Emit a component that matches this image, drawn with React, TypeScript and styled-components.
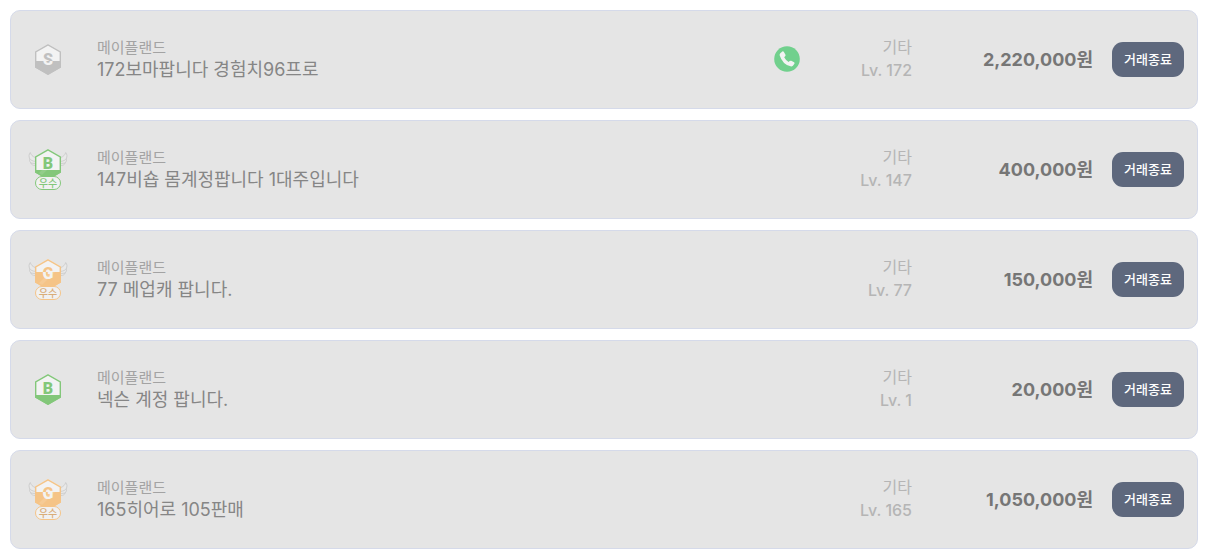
import React, { useId } from "react";
import styled, { createGlobalStyle } from "styled-components";

const GlobalStyle = createGlobalStyle`
  * { box-sizing: border-box; }
  body {
    margin: 0;
    background: #ffffff;
    font-family: Inter, "Noto Sans CJK KR", sans-serif;
  }
`;

type Grade = "S" | "B" | "G";

interface Listing {
  grade: Grade;
  excellent: boolean;
  phone: boolean;
  game: string;
  title: string;
  category: string;
  level: number;
  price: string;
}

const listings: Listing[] = [
  { grade: "S", excellent: false, phone: true, game: "메이플랜드", title: "172보마팝니다 경험치96프로", category: "기타", level: 172, price: "2,220,000원" },
  { grade: "B", excellent: true, phone: false, game: "메이플랜드", title: "147비숍 몸계정팝니다 1대주입니다", category: "기타", level: 147, price: "400,000원" },
  { grade: "G", excellent: true, phone: false, game: "메이플랜드", title: "77 메업캐 팝니다.", category: "기타", level: 77, price: "150,000원" },
  { grade: "B", excellent: false, phone: false, game: "메이플랜드", title: "넥슨 계정 팝니다.", category: "기타", level: 1, price: "20,000원" },
  { grade: "G", excellent: true, phone: false, game: "메이플랜드", title: "165히어로 105판매", category: "기타", level: 165, price: "1,050,000원" },
];

const List = styled.ul`
  display: flex;
  flex-direction: column;
  gap: 11px;
  margin: 0;
  padding: 10px 7px 4px 10px;
  list-style: none;
`;

const Card = styled.li`
  display: flex;
  align-items: center;
  min-height: 99px;
  padding: 0 13px 0 17px;
  background: #e5e5e5;
  border: 1px solid #d5daea;
  border-radius: 10px;
`;

const BadgeSlot = styled.div`
  display: flex;
  flex: none;
  width: 40px;
  margin-right: 29px;
`;

const Summary = styled.div`
  display: flex;
  flex: 1;
  flex-direction: column;
  min-width: 0;
  padding-bottom: 1px;
`;

const Game = styled.span`
  font-size: 15px;
  line-height: 21px;
  color: #a3a3a3;
`;

const Title = styled.span`
  font-size: 18px;
  line-height: 24px;
  color: #868686;
`;

const PhoneSlot = styled.div`
  display: flex;
  flex: none;
  width: 26px;
  padding-bottom: 1px;
`;

const Details = styled.div`
  display: flex;
  flex: none;
  flex-direction: column;
  width: 112px;
  padding-bottom: 2px;
  font-size: 16px;
  font-weight: 500;
  line-height: 23px;
  text-align: right;
  color: #b5b5b5;
`;

const Category = styled.span`
  font-weight: 400;
`;

const Price = styled.strong`
  flex: none;
  width: 181px;
  margin-right: 19px;
  font-size: 18px;
  font-weight: 700;
  line-height: 24px;
  text-align: right;
  color: #767676;
`;

const StatusButton = styled.button`
  flex: none;
  width: 72px;
  height: 35px;
  padding: 0 0 2px;
  border: 0;
  border-radius: 11px;
  background: #5e687d;
  color: #ffffff;
  font-family: inherit;
  font-size: 13px;
  font-weight: 500;
  line-height: 20px;
`;

const gradeStyle = {
  S: { color: "#c0c0c0", split: 20, baseline: 24 },
  B: { color: "#83c77a", split: 24, baseline: 23 },
  G: { color: "#f5c487", split: 16, baseline: 23 },
};

const Wing = () => (
  <g fill="#e9e9e9" stroke="#cbcbcb" strokeWidth="0.9" strokeLinecap="round" strokeLinejoin="round">
    <path d="M7 19.500C4.500 19.500 3 18.300 3 17C1.600 15.800 1.300 14 1.700 12.700C0.700 10.500 0.800 8.200 2.300 6.500C3 9 4.500 10.500 7 11.500Z" />
    <path d="M1.700 12.700C3 14.500 4.500 15 6.500 15.300M3 17L6.500 17.500" fill="none" />
  </g>
);

function GradeBadge({ grade, excellent }: { grade: Grade; excellent: boolean }) {
  const id = useId();
  const { color, split, baseline } = gradeStyle[grade];
  const at = grade === "B" ? 30 : split;
  return (
    <svg width="40" height="41" viewBox="0 0 40 41" role="img" aria-label={grade}>
      <defs>
        <linearGradient id={id} gradientUnits="userSpaceOnUse" x1="0" y1="0" x2="0" y2="42">
          <stop offset={at / 42} stopColor={color} />
          <stop offset={at / 42} stopColor="#f3f3f3" />
        </linearGradient>
        <clipPath id={id + "c"}>
          <path d="M20 3L33 10.500V26.500L20 34L7 26.500V10.500Z" />
        </clipPath>
      </defs>
      <g transform={excellent ? "translate(0 -3)" : "translate(0 2)"}>
        {excellent && (
          <>
            <Wing />
            <g transform="matrix(-1 0 0 1 40 0)"><Wing /></g>
          </>
        )}
        <path d="M20 3L33 10.500V26.500L20 34L7 26.500V10.500Z" fill="#f3f3f3" />
        <g clipPath={`url(#${id}c)`}>
          <path d={`M6 ${split}H34V35H6Z`} fill={color} />
          {excellent && <path d="M7 31L22 16H27L12 31Z" fill="#ffffff" opacity="0.12" />}
        </g>
        <path d="M20 3.800L32.300 10.900V26.100L20 33.200L7.700 26.100V10.900Z" fill="none" stroke={color} strokeWidth="1.400" />
        <text x="20" y={baseline} textAnchor="middle" fontFamily="Roboto, sans-serif" fontWeight="900" fontSize="16" fill={`url(#${id})`}>
          {grade}
        </text>
      </g>
      {excellent && (
        <>
          <rect x="7.500" y="27.500" width="25" height="13" rx="6.500" fill="#f1f1f1" stroke={color} />
          <text x="20" y="37.500" textAnchor="middle" fontFamily="'Noto Sans CJK KR', sans-serif" fontWeight="500" fontSize="10" fill={grade === "G" ? "#d9ad78" : color}>
            우수
          </text>
        </>
      )}
    </svg>
  );
}

const PhoneIcon = () => (
  <svg width="26" height="26" viewBox="0 0 26 26" role="img" aria-label="전화">
    <circle cx="13" cy="13" r="12.800" fill="#71d08d" />
    <path
      d="M6.300 7.200L8.300 5.500Q9.200 5 9.900 5.900L11.500 8.800Q11.900 9.600 11.100 10.300L10.200 11.200Q11.500 14 14.600 15.900L15.700 15Q16.400 14.400 17.200 14.800L20.100 16.300Q20.900 16.900 20.400 17.800L18.900 19.800Q17.900 20.700 16.500 20.300Q8.500 18.200 5.700 9.400Q5.400 8 6.300 7.200Z"
      fill="#f3f3f3"
    />
  </svg>
);

export default function App() {
  return (
    <>
      <GlobalStyle />
      <List>
        {listings.map((item) => (
          <Card key={item.title}>
            <BadgeSlot>
              <GradeBadge grade={item.grade} excellent={item.excellent} />
            </BadgeSlot>
            <Summary>
              <Game>{item.game}</Game>
              <Title>{item.title}</Title>
            </Summary>
            <PhoneSlot>{item.phone && <PhoneIcon />}</PhoneSlot>
            <Details>
              <Category>{item.category}</Category>
              <span>{`Lv. ${item.level}`}</span>
            </Details>
            <Price>{item.price}</Price>
            <StatusButton type="button">거래종료</StatusButton>
          </Card>
        ))}
      </List>
    </>
  );
}
